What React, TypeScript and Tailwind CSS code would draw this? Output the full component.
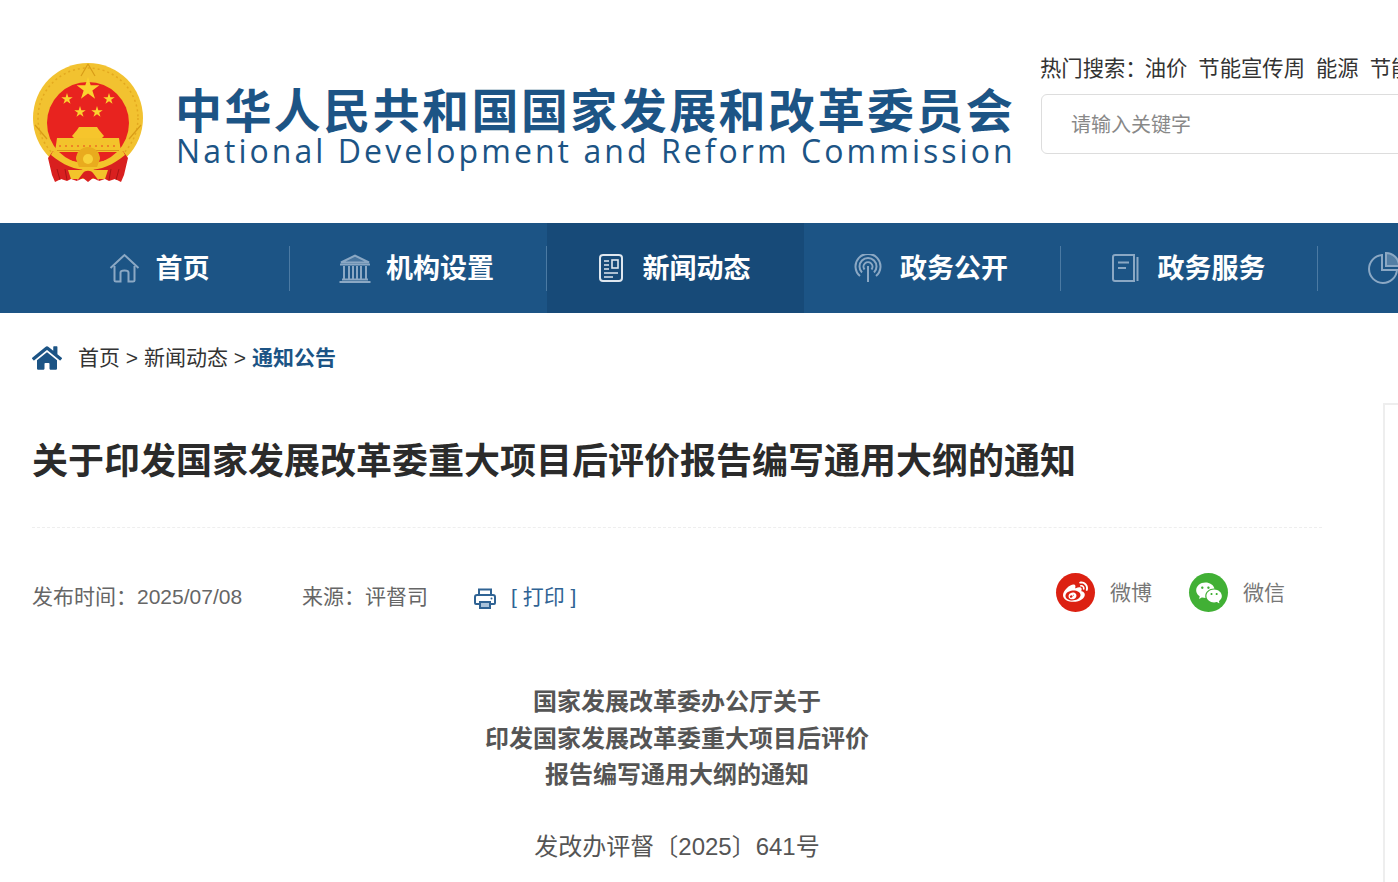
import React from 'react'
import { FaHome, FaWeibo } from 'react-icons/fa'
import { RiWechatFill } from 'react-icons/ri'

const cjk = "font-['Liberation_Sans','Noto_Sans_CJK_SC',sans-serif]"

function starPoints(cx: number, cy: number, r: number) {
  const pts: string[] = []
  for (let i = 0; i < 10; i++) {
    const rad = i % 2 === 0 ? r : r * 0.382
    const a = -Math.PI / 2 + (i * Math.PI) / 5
    pts.push(`${(cx + rad * Math.cos(a)).toFixed(2)},${(cy + rad * Math.sin(a)).toFixed(2)}`)
  }
  return pts.join(' ')
}

function Emblem() {
  return (
    <svg width="110" height="120" viewBox="0 0 110 120" className="shrink-0">
      {/* wreath */}
      <circle cx="55" cy="55" r="55" fill="#f2c230" />
      <circle cx="55" cy="55" r="50" fill="none" stroke="#e3a81f" strokeWidth="1.5" strokeDasharray="2 3" />
      <path d="M55 1 L48 13 M55 1 L62 13 M2 62 L14 76 M108 62 L96 76" stroke="#d99c17" strokeWidth="1.2" />
      <circle cx="55" cy="60" r="41" fill="#e8231f" />
      <polygon points={starPoints(55, 26, 12)} fill="#fbd22f" />
      <polygon points={starPoints(34, 36, 6)} fill="#fbd22f" />
      <polygon points={starPoints(76, 36, 6)} fill="#fbd22f" />
      <polygon points={starPoints(47, 49, 6)} fill="#fbd22f" />
      <polygon points={starPoints(64, 49, 6)} fill="#fbd22f" />
      {/* gate */}
      <path d="M44 67 L46 64 H64 L66 67 Z" fill="#f6c52c" />
      <path d="M39 73 L44 67 H66 L71 73 L69 75 H41 Z" fill="#f6c52c" />
      <path d="M22 89 L24 75 H86 L88 89 Z" fill="#f3c32b" />
      <path d="M26 83 H84" stroke="#e8231f" strokeWidth="0.8" strokeDasharray="2 4" />
      <path d="M24 87.5 H86" stroke="#d9951a" strokeWidth="1" />
      {/* curtains */}
      <path d="M15 95 L20 88 C26 96 36 101 50 105 L44 118 L38 116 L34 118 L28 116 L22 119 L19 112 Z" fill="#d9201f" />
      <path d="M95 95 L90 88 C84 96 74 101 60 105 L66 118 L72 116 L76 118 L82 116 L88 119 L91 112 Z" fill="#d9201f" />
      <path d="M24 106 L27 117 M32 106 L34 117 M86 106 L83 117 M78 106 L76 117" stroke="#a81514" strokeWidth="1" />
      {/* lower band and gear */}
      <path d="M20 88 C30 96 42 100 55 100 C68 100 80 96 90 88 L92 92 C80 102 68 107 55 107 C42 107 30 102 18 92 Z" fill="#f3c32b" />
      <path d="M43 96 A12 12 0 0 1 67 96 L64 104 H46 Z" fill="#e9ab1e" />
      <circle cx="55" cy="96" r="5" fill="#f8d23a" />
      <path d="M35 107 H75 L72 116 H38 Z" fill="#f3c32b" />
      <path d="M44 118 L50 110 C52 107 58 107 60 110 L66 118 L60 115 L55 119 L50 115 Z" fill="#d9201f" />
    </svg>
  )
}

function HomeLine() {
  return (
    <svg width="31" height="30" viewBox="0 0 31 30" fill="none" stroke="#8ba8c4" strokeWidth="2">
      <path d="M1.5 15 L15.5 2 L29.5 15" />
      <path d="M5.5 13 V27.5 Q5.5 28.5 7 28.5 H11.5 V19.5 Q11.5 17.5 15.5 17.5 Q19.5 17.5 19.5 19.5 V28.5 H24 Q25.5 28.5 25.5 27.5 V13" />
    </svg>
  )
}

function BankLine() {
  return (
    <svg width="32" height="29" viewBox="0 0 32 29" fill="none" stroke="#8ba8c4" strokeWidth="2">
      <path d="M2 8.5 L16 1.5 L30 8.5 Z" fill="#8ba8c4" fillOpacity="0.4" />
      <path d="M1 10.5 H31" />
      <path d="M5 12 V25 M10 12 V25 M14 12 V25 M18 12 V25 M22 12 V25 M27 12 V25" />
      <path d="M3 25.5 H29 M0.5 28 H31.5" />
    </svg>
  )
}

function NewsLine() {
  return (
    <svg width="24" height="28" viewBox="0 0 24 28" fill="none" stroke="#dfe7ef" strokeWidth="2">
      <rect x="1" y="1" width="22" height="26" rx="3" />
      <path d="M5 7 H10 M5 11 H10 M5 15 H10 M5 19 H19 M5 23 H14" strokeWidth="1.6" />
      <rect x="13" y="6" width="6" height="8" strokeWidth="1.6" />
    </svg>
  )
}

function SignalLine() {
  return (
    <svg width="28" height="28" viewBox="0 0 28 28" fill="none" stroke="#8ba8c4" strokeWidth="2">
      <path d="M6 22 A12.5 12.5 0 1 1 22 22" />
      <path d="M8 18.5 A8.5 8.5 0 1 1 20 18.5" />
      <path d="M10.5 15.5 A4.5 4.5 0 1 1 17.5 15.5" />
      <path d="M14 12 V28" />
    </svg>
  )
}

function BookLine() {
  return (
    <svg width="27" height="28" viewBox="0 0 27 28" fill="none" stroke="#8ba8c4" strokeWidth="2">
      <path d="M3 1 H22 V27 H3 Q1 27 1 25 V3 Q1 1 3 1 Z" />
      <path d="M6 8.5 H17 M6 14 H14" />
      <path d="M25.5 3 V27" />
    </svg>
  )
}

function PieLine() {
  return (
    <svg width="32" height="32" viewBox="0 0 32 32" fill="none" stroke="#8ba8c4" strokeWidth="2" className="shrink-0">
      <path d="M14 3 A14 14 0 1 0 29 18 H14 Z" />
      <path d="M18 1 V14 H31 A13 13 0 0 0 18 1 Z" fill="#8ba8c4" fillOpacity="0.5" />
    </svg>
  )
}

function PrintIcon() {
  return (
    <svg width="22" height="22" viewBox="0 0 22 22" fill="none" className="shrink-0">
      <path d="M5 7 V1.5 H17 V7" stroke="#2f6394" strokeWidth="2" />
      <path d="M5 16 H2 Q1 16 1 15 V9 Q1 7 3 7 H19 Q21 7 21 9 V15 Q21 16 20 16 H17" stroke="#2f6394" strokeWidth="2" />
      <rect x="5" y="13" width="12" height="8" fill="#2f6394" />
      <rect x="7" y="15" width="8" height="4" fill="#a9c2da" />
      <circle cx="17.5" cy="10.5" r="1" fill="#2f6394" />
    </svg>
  )
}

const navItems = [
  { label: '首页', icon: <HomeLine />, cell: 'gap-[16px] pr-[5px]' },
  { label: '机构设置', icon: <BankLine />, cell: 'gap-[15px] pr-[4px]' },
  { label: '新闻动态', icon: <NewsLine />, cell: 'gap-[20px] pr-[2px] bg-[#174a78]', active: true },
  { label: '政务公开', icon: <SignalLine />, cell: 'gap-[18px] pr-[3px]' },
  { label: '政务服务', icon: <BookLine />, cell: 'gap-[19px] pr-[2px]' },
]

const hotWords = ['油价', '节能宣传周', '能源', '节能']

export default function App() {
  return (
    <div className={`w-[1398px] h-[882px] overflow-hidden bg-white ${cjk}`}>
      {/* Header */}
      <header className="h-[223px] flex pl-[33px]">
        <div className="mt-[63px]">
          <Emblem />
        </div>
        <div className="ml-[33px] mt-[80px] w-[865px] shrink-0 font-['Noto_Sans_CJK_SC',sans-serif] text-[#1c5485]">
          <div className="text-[47px] leading-[56px] font-bold tracking-[2.42px] -ml-[1px] whitespace-nowrap">
            中华人民共和国国家发展和改革委员会
          </div>
          <div className="font-['Open_Sans',sans-serif] text-[32px] leading-[30px] tracking-[3.05px] whitespace-nowrap">
            National Development and Reform Commission
          </div>
        </div>
        <div className="mt-[54px] shrink-0">
          <div className="flex gap-[11px] text-[21.33px] leading-[30px] text-[#333] whitespace-nowrap -ml-[1px]">
            <span className="-mr-[13px]">热门搜索：</span>
            {hotWords.map(w => (
              <span key={w}>{w}</span>
            ))}
          </div>
          <div className="mt-[10px] h-[60px] w-[420px] border border-[#ddd] rounded-md flex items-center pl-[29px] pt-[1px] text-[20px] text-[#888]">
            请输入关键字
          </div>
        </div>
      </header>

      {/* Nav */}
      <nav className="h-[90px] bg-[#1c5485] flex pl-[33px] overflow-hidden">
        {navItems.map(item => (
          <div
            key={item.label}
            className={`relative w-[257px] shrink-0 flex items-center justify-center ${item.cell}`}
          >
            {item.icon}
            <span className="mt-[2px] text-white text-[27px] font-bold leading-none">{item.label}</span>
            {!item.active && <span className="absolute right-0 top-[23px] h-[45px] w-px bg-[#4b7aa3]" />}
          </div>
        ))}
        <div className="pl-[50px] flex items-center">
          <PieLine />
        </div>
      </nav>

      {/* Breadcrumb */}
      <div className="h-[90px] flex items-center pl-[32px] text-[21px] text-[#333]">
        <FaHome className="text-[#1c5485] text-[30px] mr-[16px]" />
        <span>首页 &gt; 新闻动态 &gt; </span>
        <span className="ml-[6px] font-bold text-[#1c5485]">通知公告</span>
      </div>

      {/* Article */}
      <div className="flex pl-[32px]">
        <main className="w-[1290px] shrink-0">
          <h1 className="h-[125px] pt-[33px] text-[36px] leading-[52px] font-bold text-[#2b2b2b] border-b border-dashed border-[#eee] whitespace-nowrap">
            关于印发国家发展改革委重大项目后评价报告编写通用大纲的通知
          </h1>
          <div className="mt-[45px] h-[50px] flex items-start text-[21px] text-[#666]">
            <span className="mt-[9px] leading-[30px] w-[270px]">发布时间：2025/07/08</span>
            <span className="mt-[9px] leading-[30px] w-[172px]">来源：评督司</span>
            <span className="mt-[9px] h-[30px] flex items-center text-[#2f6394]">
              <span className="mt-[4px]"><PrintIcon /></span>
              <span className="ml-[15px]">[ 打印 ]</span>
            </span>
            <div className="ml-auto flex items-center text-[#777] mr-[37px]">
              <span className="w-[39px] h-[39px] rounded-full bg-[#dc2112] flex items-center justify-center">
                <FaWeibo className="text-white text-[25px]" />
              </span>
              <span className="ml-[15px]">微博</span>
              <span className="ml-[37px] w-[39px] h-[39px] rounded-full bg-[#41b035] flex items-center justify-center">
                <RiWechatFill className="text-white text-[28px]" />
              </span>
              <span className="ml-[15px]">微信</span>
            </div>
          </div>
          <div className="mt-[61px] text-center text-[24px] leading-[36.5px] font-bold text-[#555]">
            <p>国家发展改革委办公厅关于</p>
            <p>印发国家发展改革委重大项目后评价</p>
            <p>报告编写通用大纲的通知</p>
          </div>
          <p className="mt-[35px] text-center text-[24px] leading-[36px] text-[#555]">发改办评督〔2025〕641号</p>
        </main>
        <aside className="ml-[61px] w-[40px] h-[500px] shrink-0 border-l-2 border-t-2 border-[#eee]" />
      </div>
    </div>
  )
}
